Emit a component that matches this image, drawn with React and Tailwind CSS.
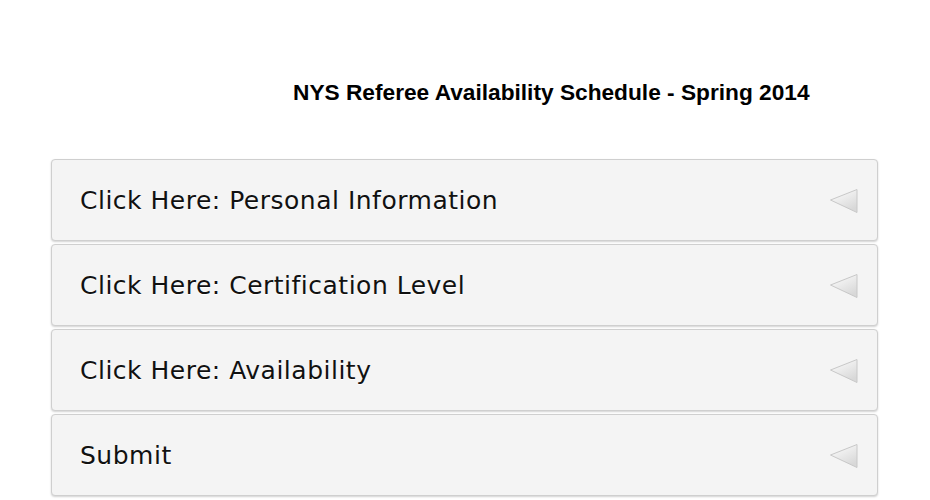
import React from "react";

const items = [
  "Click Here: Personal Information",
  "Click Here: Certification Level",
  "Click Here: Availability",
  "Submit",
];

function Arrow() {
  return (
    <svg width="30" height="26" viewBox="0 0 30 26" className="shrink-0 mt-[2px]">
      <defs>
        <linearGradient id="ag" x1="0" y1="0" x2="0.6" y2="1">
          <stop offset="0" stopColor="#ffffff" />
          <stop offset="1" stopColor="#d8d8d8" />
        </linearGradient>
      </defs>
      <polygon points="1.5,12 28,1.5 28,24.5" fill="url(#ag)" stroke="#c8c8c8" strokeWidth="1" strokeLinejoin="round" />
    </svg>
  );
}

export default function App() {
  return (
    <div className="w-[930px] h-[500px] bg-white overflow-hidden">
      <div className="pt-[78px] pl-[293px] h-[159px]">
        <h1 className="text-[22.7px] font-bold text-black leading-[28px]" style={{ fontFamily: '"Liberation Sans", Arial, sans-serif' }}>
          NYS Referee Availability Schedule - Spring 2014
        </h1>
      </div>
      <div className="ml-[51px] w-[827px] flex flex-col gap-[3px]">
        {items.map((t) => (
          <div
            key={t}
            className="h-[82px] rounded-[4px] border border-[#cfcfcf] bg-[#f4f4f4] shadow-[0_1px_2px_rgba(0,0,0,0.18)] flex items-center justify-between pl-[28px] pr-[18px]"
          >
            <span
              className="mt-[2px] text-[25px] tracking-[0.5px] text-[#111] [text-shadow:0_1px_0_#fff]"
              style={{ fontFamily: '"DejaVu Sans", Verdana, sans-serif' }}
            >
              {t}
            </span>
            <Arrow />
          </div>
        ))}
      </div>
    </div>
  );
}
